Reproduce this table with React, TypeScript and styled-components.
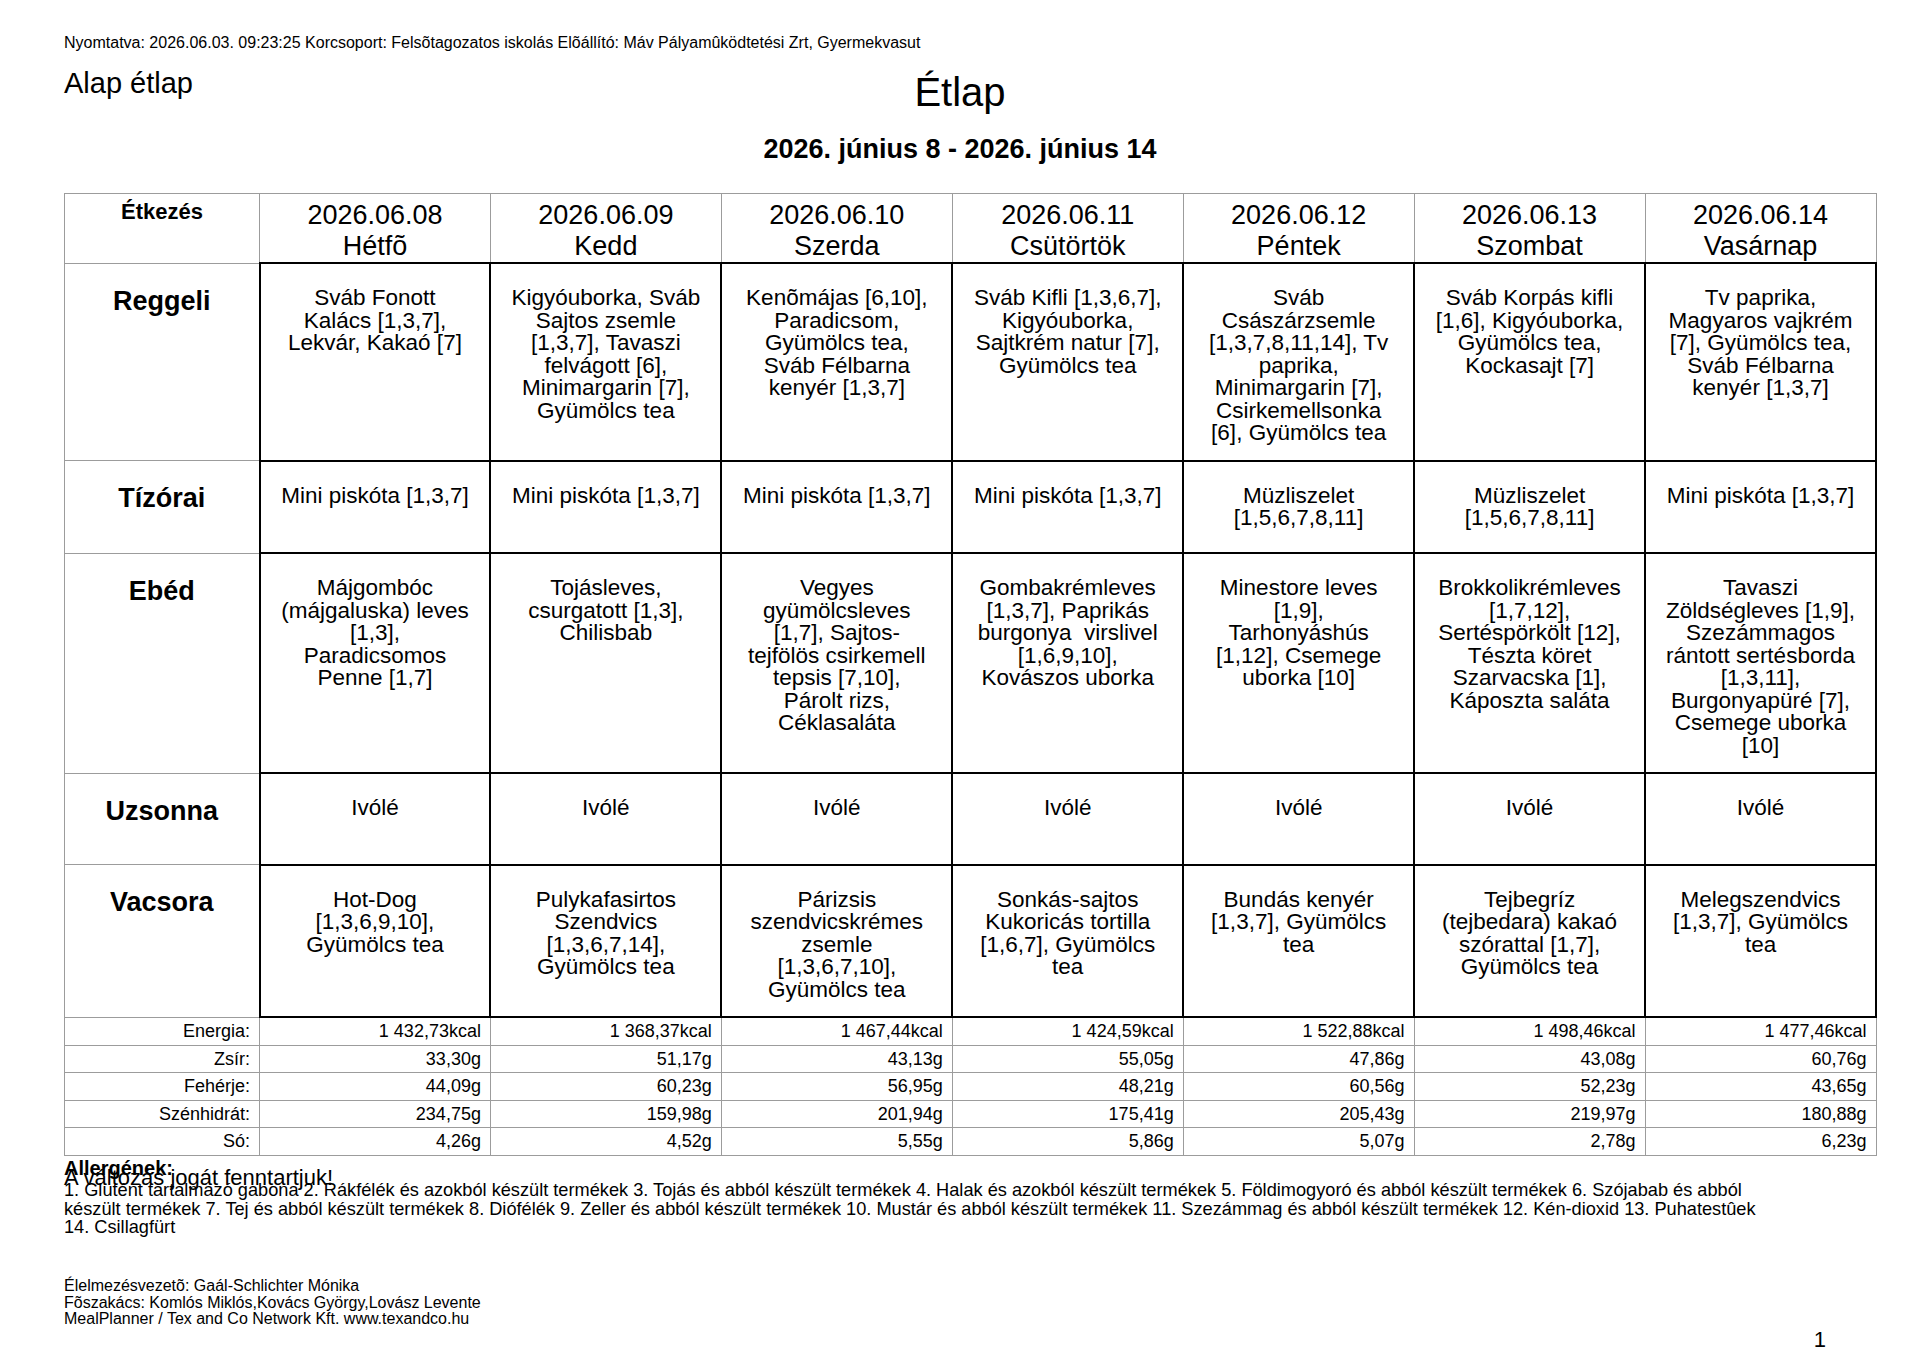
import { createGlobalStyle, styled } from "styled-components";

const GlobalStyle = createGlobalStyle`
  html, body {
    margin: 0;
    padding: 0;
    background: #fff;
  }
  body {
    font-family: "Liberation Sans", Arial, Helvetica, sans-serif;
    color: #000;
  }
`

const Page = styled.div`
  width: 1920px;
  height: 1357px;
  box-sizing: border-box;
  padding-top: 34px;
  overflow: hidden;
`

const PrintInfo = styled.div`
  padding-left: 64px;
  font-size: 16px;
  line-height: 18px;
`

const TitleRow = styled.div`
  display: grid;
  grid-template-columns: 1fr auto 1fr;
  align-items: start;
  margin-top: 14px;
`

const SideTitle = styled.div`
  padding-left: 64px;
  font-size: 29px;
  line-height: 34px;
`

const MainTitle = styled.h1`
  margin: 0;
  padding-top: 3px;
  font-size: 40px;
  line-height: 46px;
  font-weight: normal;
`

const DateRange = styled.h2`
  margin: 18px 0 0;
  text-align: center;
  font-size: 27px;
  line-height: 32px;
  font-weight: bold;
`

const TableWrap = styled.div`
  margin-top: 28px;
  padding-left: 64px;
`

const MenuTable = styled.table`
  width: 1813px;
  table-layout: fixed;
  border-collapse: collapse;

  td, th {
    border: 1px solid #9c9c9c;
  }
`

const CornerCell = styled.th`
  vertical-align: top;
  padding: 6px 4px 1px;
  font-size: 22px;
  line-height: 24px;
  font-weight: bold;
  text-align: center;
`

const DayHead = styled.th`
  vertical-align: top;
  padding: 6px 4px 0;
  font-size: 27px;
  line-height: 31px;
  font-weight: normal;
  text-align: center;
`

const MealLabel = styled.td`
  vertical-align: top;
  padding: 22px 4px 0;
  font-size: 27px;
  line-height: 31px;
  font-weight: bold;
  text-align: center;
`

const DishCell = styled.td`
  && {
    border: 2px solid #000;
  }
  vertical-align: top;
  padding: 23px 4px 15.25px;
  font-size: 22.5px;
  line-height: 22.5px;
  text-align: center;
`

const DishLines = styled.div<{ $minH: number }>`
  min-height: ${(p) => p.$minH}px;
  white-space: pre;
`

const NutrLabel = styled.td`
  padding: 3px 9px;
  font-size: 18px;
  line-height: 20.55px;
  text-align: right;
`

const NutrValue = styled.td`
  padding: 3px 9px;
  font-size: 18px;
  line-height: 20.55px;
  text-align: right;
`

const FooterNotes = styled.div`
  position: relative;
  padding-left: 64px;
`

const AllergenTitle = styled.div`
  margin-top: 2px;
  font-size: 20px;
  line-height: 20px;
  font-weight: bold;
`

const AllergenText = styled.div`
  margin-top: 3.5px;
  font-size: 18.2px;
  line-height: 18.3px;
  white-space: nowrap;
`

const Notice = styled.div`
  position: absolute;
  top: 8px;
  left: 64px;
  font-size: 22px;
  line-height: 24px;
`

const Signatures = styled.div`
  margin-top: 42px;
  padding-left: 64px;
  font-size: 16px;
  line-height: 16.5px;
`

const PageNumber = styled.div`
  margin-top: 0;
  padding-right: 94px;
  text-align: right;
  font-size: 22px;
  line-height: 24px;
`

const days = [
  { date: "2026.06.08", name: "Hétfõ" },
  { date: "2026.06.09", name: "Kedd" },
  { date: "2026.06.10", name: "Szerda" },
  { date: "2026.06.11", name: "Csütörtök" },
  { date: "2026.06.12", name: "Péntek" },
  { date: "2026.06.13", name: "Szombat" },
  { date: "2026.06.14", name: "Vasárnap" },
]

const piskota = ["Mini piskóta [1,3,7]"]
const muzli = ["Müzliszelet", "[1,5,6,7,8,11]"]

const meals: { label: string; minH: number; cells: string[][] }[] = [
  {
    label: "Reggeli",
    minH: 51,
    cells: [
      ["Sváb Fonott", "Kalács [1,3,7],", "Lekvár, Kakaó [7]"],
      ["Kigyóuborka, Sváb", "Sajtos zsemle", "[1,3,7], Tavaszi", "felvágott [6],", "Minimargarin [7],", "Gyümölcs tea"],
      ["Kenõmájas [6,10],", "Paradicsom,", "Gyümölcs tea,", "Sváb Félbarna", "kenyér [1,3,7]"],
      ["Sváb Kifli [1,3,6,7],", "Kigyóuborka,", "Sajtkrém natur [7],", "Gyümölcs tea"],
      ["Sváb", "Császárzsemle", "[1,3,7,8,11,14], Tv", "paprika,", "Minimargarin [7],", "Csirkemellsonka", "[6], Gyümölcs tea"],
      ["Sváb Korpás kifli", "[1,6], Kigyóuborka,", "Gyümölcs tea,", "Kockasajt [7]"],
      ["Tv paprika,", "Magyaros vajkrém", "[7], Gyümölcs tea,", "Sváb Félbarna", "kenyér [1,3,7]"],
    ],
  },
  {
    label: "Tízórai",
    minH: 52,
    cells: [piskota, piskota, piskota, piskota, muzli, muzli, piskota],
  },
  {
    label: "Ebéd",
    minH: 51,
    cells: [
      ["Májgombóc", "(májgaluska) leves", "[1,3],", "Paradicsomos", "Penne [1,7]"],
      ["Tojásleves,", "csurgatott [1,3],", "Chilisbab"],
      ["Vegyes", "gyümölcsleves", "[1,7], Sajtos-", "tejfölös csirkemell", "tepsis [7,10],", "Párolt rizs,", "Céklasaláta"],
      ["Gombakrémleves", "[1,3,7], Paprikás", "burgonya  virslivel", "[1,6,9,10],", "Kovászos uborka"],
      ["Minestore leves", "[1,9],", "Tarhonyáshús", "[1,12], Csemege", "uborka [10]"],
      ["Brokkolikrémleves", "[1,7,12],", "Sertéspörkölt [12],", "Tészta köret", "Szarvacska [1],", "Káposzta saláta"],
      ["Tavaszi", "Zöldségleves [1,9],", "Szezámmagos", "rántott sertésborda", "[1,3,11],", "Burgonyapüré [7],", "Csemege uborka", "[10]"],
    ],
  },
  {
    label: "Uzsonna",
    minH: 51,
    cells: Array.from({ length: 7 }, () => ["Ivólé"]),
  },
  {
    label: "Vacsora",
    minH: 51,
    cells: [
      ["Hot-Dog", "[1,3,6,9,10],", "Gyümölcs tea"],
      ["Pulykafasirtos", "Szendvics", "[1,3,6,7,14],", "Gyümölcs tea"],
      ["Párizsis", "szendvicskrémes", "zsemle", "[1,3,6,7,10],", "Gyümölcs tea"],
      ["Sonkás-sajtos", "Kukoricás tortilla", "[1,6,7], Gyümölcs", "tea"],
      ["Bundás kenyér", "[1,3,7], Gyümölcs", "tea"],
      ["Tejbegríz", "(tejbedara) kakaó", "szórattal [1,7],", "Gyümölcs tea"],
      ["Melegszendvics", "[1,3,7], Gyümölcs", "tea"],
    ],
  },
]

const nutrition = [
  { label: "Energia:", values: ["1 432,73kcal", "1 368,37kcal", "1 467,44kcal", "1 424,59kcal", "1 522,88kcal", "1 498,46kcal", "1 477,46kcal"] },
  { label: "Zsír:", values: ["33,30g", "51,17g", "43,13g", "55,05g", "47,86g", "43,08g", "60,76g"] },
  { label: "Fehérje:", values: ["44,09g", "60,23g", "56,95g", "48,21g", "60,56g", "52,23g", "43,65g"] },
  { label: "Szénhidrát:", values: ["234,75g", "159,98g", "201,94g", "175,41g", "205,43g", "219,97g", "180,88g"] },
  { label: "Só:", values: ["4,26g", "4,52g", "5,55g", "5,86g", "5,07g", "2,78g", "6,23g"] },
]

const allergenLines = [
  "1. Glutént tartalmazó gabona 2. Rákfélék és azokból készült termékek 3. Tojás és abból készült termékek 4. Halak és azokból készült termékek 5. Földimogyoró és abból készült termékek 6. Szójabab és abból",
  "készült termékek 7. Tej és abból készült termékek 8. Diófélék 9. Zeller és abból készült termékek 10. Mustár és abból készült termékek 11. Szezámmag és abból készült termékek 12. Kén-dioxid 13. Puhatestûek",
  "14. Csillagfürt",
]

const Lines = ({ lines }: { lines: string[] }) => (
  <>
    {lines.map((l, i) => (
      <span key={i}>
        {l}
        {i < lines.length - 1 && <br />}
      </span>
    ))}
  </>
)

const App = () => {
  return (
    <>
      <GlobalStyle />
      <Page>
        <PrintInfo>
          Nyomtatva: 2026.06.03. 09:23:25 Korcsoport: Felsõtagozatos iskolás Elõállító: Máv Pályamûködtetési Zrt, Gyermekvasut
        </PrintInfo>
        <TitleRow>
          <SideTitle>Alap étlap</SideTitle>
          <MainTitle>Étlap</MainTitle>
          <div />
        </TitleRow>
        <DateRange>2026. június 8 - 2026. június 14</DateRange>

        <TableWrap>
          <MenuTable>
            <colgroup>
              <col style={{ width: 195 }} />
              {days.map((d) => (
                <col key={d.date} />
              ))}
            </colgroup>
            <thead>
              <tr>
                <CornerCell>Étkezés</CornerCell>
                {days.map((d) => (
                  <DayHead key={d.date}>
                    {d.date}
                    <br />
                    {d.name}
                  </DayHead>
                ))}
              </tr>
            </thead>
            <tbody>
              {meals.map((m) => (
                <tr key={m.label}>
                  <MealLabel>{m.label}</MealLabel>
                  {m.cells.map((c, i) => (
                    <DishCell key={i}>
                      <DishLines $minH={m.minH}>
                        <Lines lines={c} />
                      </DishLines>
                    </DishCell>
                  ))}
                </tr>
              ))}
              {nutrition.map((n) => (
                <tr key={n.label}>
                  <NutrLabel>{n.label}</NutrLabel>
                  {n.values.map((v, i) => (
                    <NutrValue key={i}>{v}</NutrValue>
                  ))}
                </tr>
              ))}
            </tbody>
          </MenuTable>
        </TableWrap>

        <FooterNotes>
          <AllergenTitle>Allergének:</AllergenTitle>
          <AllergenText>
            <Lines lines={allergenLines} />
          </AllergenText>
          <Notice>A változás jogát fenntartjuk!</Notice>
        </FooterNotes>

        <Signatures>
          Élelmezésvezetõ: Gaál-Schlichter Mónika
          <br />
          Fõszakács: Komlós Miklós,Kovács György,Lovász Levente
          <br />
          MealPlanner / Tex and Co Network Kft. www.texandco.hu
        </Signatures>
        <PageNumber>1</PageNumber>
      </Page>
    </>
  )
}

export default App
